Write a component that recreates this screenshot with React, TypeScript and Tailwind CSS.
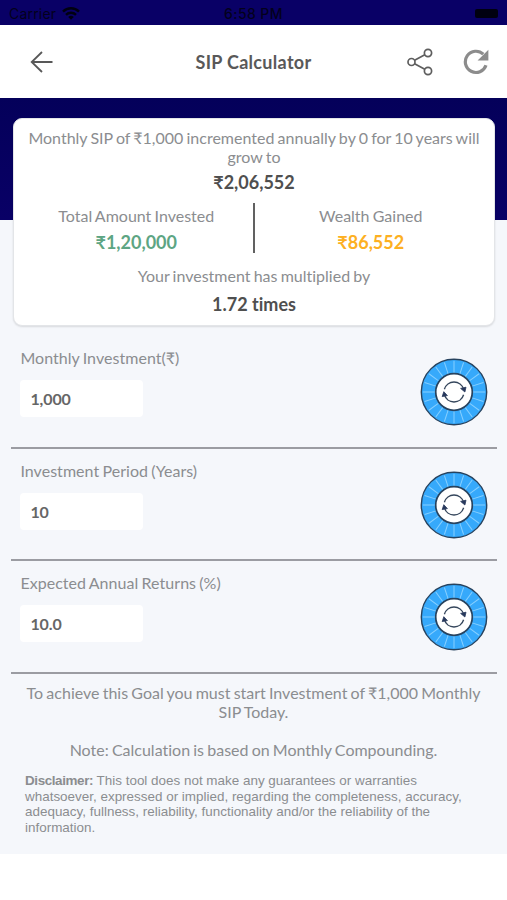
import { useState } from "react";

type FieldKey = "amount" | "years" | "returns";

const fields: { key: FieldKey; label: string }[] = [
  { key: "amount", label: "Monthly Investment(₹)" },
  { key: "years", label: "Investment Period (Years)" },
  { key: "returns", label: "Expected Annual Returns (%)" },
];

const spokes = Array.from({ length: 20 }, (_, i) => i * 18);

function StatusBar() {
  return (
    <div className="grid h-[25px] grid-cols-3 items-center bg-[#090066] px-[9px] pt-[2px] font-['Inter','Liberation_Sans',sans-serif] text-[14px] leading-none text-[#03001c]">
      <div className="flex items-center gap-[6px]">
        <span className="tracking-[0.2px]">Carrier</span>
        <svg width="18" height="13" viewBox="0 0 18 13" fill="none" stroke="#000010" strokeWidth="2.4">
          <path d="M1 4.6a11.3 11.3 0 0 1 16 0" />
          <path d="M4 7.8a7.1 7.1 0 0 1 10 0" />
          <path d="M9 12.8 6.2 10a4 4 0 0 1 5.6 0z" fill="#000010" stroke="none" />
        </svg>
      </div>
      <span className="text-center font-medium tracking-[0.4px]">6:58 PM</span>
      <span className="h-[9px] w-[23px] justify-self-end rounded-[2px] bg-[#000010]" />
    </div>
  );
}

function BackIcon() {
  return (
    <svg width="24" height="24" viewBox="0 0 24 24" fill="none" stroke="#585858" strokeWidth="1.8">
      <path d="M12 2 1.7 12 12 22M2.1 12h20.4" />
    </svg>
  );
}

function ShareIcon() {
  return (
    <svg width="28" height="28" viewBox="0 0 28 28" fill="none" stroke="#5e5e5e" strokeWidth="1.7">
      <circle cx="5.5" cy="14" r="3.5" />
      <circle cx="22" cy="5" r="3.6" />
      <circle cx="22" cy="23" r="3.6" />
      <path d="M8.6 12.3 18.8 6.8M8.6 15.7l10.2 5.5" />
    </svg>
  );
}

function ReloadIcon() {
  return (
    <svg width="26" height="26" viewBox="0 0 26 26" fill="none">
      <path d="M20.3 5.2A10.6 10.6 0 1 0 23 16.2" stroke="#8c8c8c" strokeWidth="3.2" />
      <path d="M25.4.8v10.8H14.6z" fill="#8c8c8c" />
    </svg>
  );
}

function DialIcon() {
  return (
    <svg width="68" height="68" viewBox="0 0 68 68" fill="none">
      <circle cx="34" cy="34" r="32.7" fill="#36a9fb" stroke="#27435f" strokeWidth="1.4" />
      {spokes.map((deg) => (
        <path key={deg} d="M34 3v12" stroke="#86cfff" strokeWidth="1" transform={`rotate(${deg} 34 34)`} />
      ))}
      <circle cx="34" cy="34" r="18.3" fill="#fff" stroke="#27435f" strokeWidth="1.7" />
      <path d="M24.4 31.2A10 10 0 0 1 43.6 31.2M43.6 36.8A10 10 0 0 1 24.4 36.8" stroke="#35465c" strokeWidth="1.4" />
      <path d="M40.6 30.4l5.4-1.2-1.1 4.8zM27.4 37.6l-5.2 1 1.6-4.9z" fill="#27385c" stroke="#27385c" strokeWidth="0.8" />
    </svg>
  );
}

function SummaryCard() {
  return (
    <div className="h-[208px] rounded-[9px] border border-[#e3e5e8] bg-white pt-[9px] text-center text-[16px] leading-[19px] shadow-[0_1px_2px_rgba(0,0,0,0.12)]">
      <p>
        Monthly SIP of ₹1,000 incremented annually by 0 for 10 years will
        <br />
        grow to
      </p>
      <p className="mt-[5px] text-[18px] font-bold leading-[22px] text-[#4f4f4f]">₹2,06,552</p>
      <div className="mt-[10px] flex h-[50px] pl-[6px] pr-[7px]">
        <div className="flex-1 pt-[3px]">
          <p>Total Amount Invested</p>
          <p className="mt-[6px] text-[18px] font-bold leading-[22px] text-[#5da583]">₹1,20,000</p>
        </div>
        <div className="w-[2px] bg-[#616161]" />
        <div className="flex-1 pt-[3px]">
          <p>Wealth Gained</p>
          <p className="mt-[6px] text-[18px] font-bold leading-[22px] text-[#fdb022]">₹86,552</p>
        </div>
      </div>
      <p className="mt-[13px]">Your investment has multiplied by</p>
      <p className="mt-[8px] text-[18px] font-bold leading-[22px] text-[#4f4f4f] [word-spacing:0px]">1.72 times</p>
    </div>
  );
}

export default function App() {
  const [values, setValues] = useState<Record<FieldKey, string>>({
    amount: "1,000",
    years: "10",
    returns: "10.0",
  });

  return (
    <div className="min-h-[900px] w-[507px] overflow-hidden bg-white font-['Lato','Noto_Sans',sans-serif] text-[#8b8d90] [font-variant-ligatures:none]">
      <StatusBar />
      <header className="flex h-[73px] items-center bg-white pl-[30px] pr-[18px]">
        <button type="button" aria-label="Back" className="w-[70px]">
          <BackIcon />
        </button>
        <h1 className="flex-1 pt-px text-center text-[18px] font-bold tracking-[0.3px] text-[#595959]">
          SIP Calculator
        </h1>
        <div className="flex items-center gap-[29px]">
          <button type="button" aria-label="Share" className="-ml-px">
            <ShareIcon />
          </button>
          <button type="button" aria-label="Reset">
            <ReloadIcon />
          </button>
        </div>
      </header>

      <main className="h-[756px] bg-[#f5f7fb] [word-spacing:-0.9px]">
        <section className="bg-[linear-gradient(#04005a_0,#090066_122px,#f5f7fb_122px)] pl-[13px] pr-[12px] pt-[20px]">
          <SummaryCard />
        </section>

        <section className="pl-[11px] pr-[10px] pt-[10px]">
          {fields.map(({ key, label }) => (
            <div
              key={key}
              className="flex h-[112.5px] justify-between border-b-2 border-[#9b9ca2] pl-[9.4px] pr-[9px]"
            >
              <label className="pt-[12.4px] text-[16px] leading-[20px] tracking-[0.04px]">
                {label}
                <input
                  value={values[key]}
                  onChange={(e) => setValues({ ...values, [key]: e.target.value })}
                  className="mt-[12px] block h-[37px] w-[123px] rounded-[4px] bg-white px-[10px] text-[16px] font-bold tracking-[-0.1px] text-[#666666] outline-none"
                />
              </label>
              <div className="pt-[22px]">
                <DialIcon />
              </div>
            </div>
          ))}
        </section>

        <section className="pt-[9.5px] text-center text-[16px] leading-[19px]">
          <p>
            To achieve this Goal you must start Investment of ₹1,000 Monthly
            <br />
            SIP Today.
          </p>
          <p className="mt-[19px]">Note: Calculation is based on Monthly Compounding.</p>
        </section>
        <p className="pl-[25px] pt-[14px] font-['Liberation_Sans',Arial,sans-serif] text-[13.45px] leading-[15.5px] [word-spacing:0px]">
          <b className="tracking-[-0.4px]">Disclaimer:</b> This tool does not make any guarantees or warranties
          <br />
          whatsoever, expressed or implied, regarding the completeness, accuracy,
          <br />
          adequacy, fullness, reliability, functionality and/or the reliability of the
          <br />
          information.
        </p>
      </main>
    </div>
  );
}
